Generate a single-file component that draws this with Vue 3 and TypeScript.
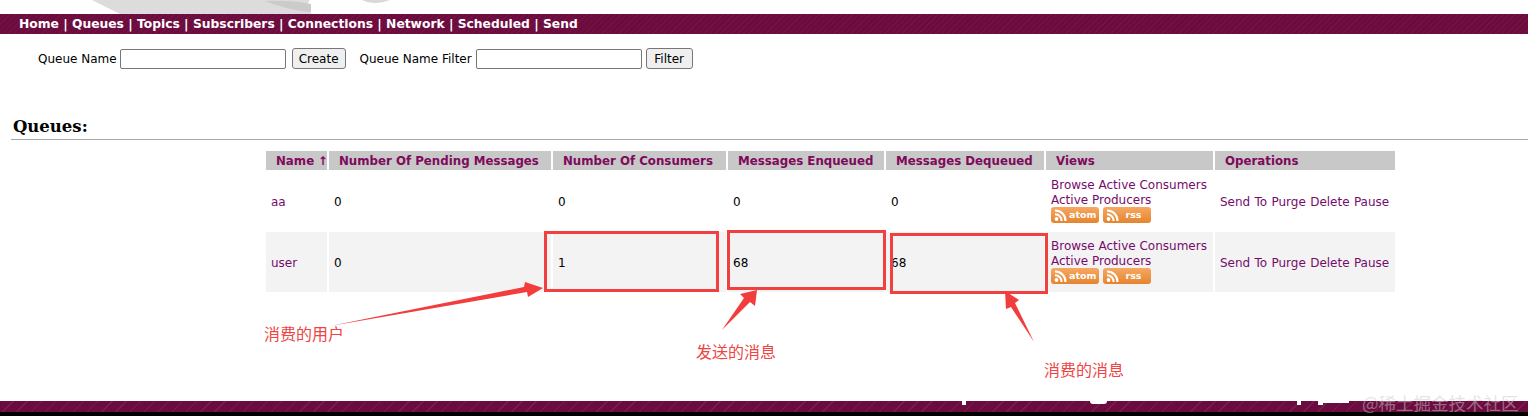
<script setup lang="ts">
const nav: string[] = ['Home', 'Queues', 'Topics', 'Subscribers', 'Connections', 'Network', 'Scheduled', 'Send']
const heads = [
  { label: 'Name ↑', width: 61 },
  { label: 'Number Of Pending Messages', width: 222 },
  { label: 'Number Of Consumers', width: 173 },
  { label: 'Messages Enqueued', width: 156 },
  { label: 'Messages Dequeued', width: 158 },
  { label: 'Views', width: 167 },
  { label: 'Operations', width: 180 },
]
const rows = [
  { name: 'aa', pending: 0, consumers: 0, enq: 0, deq: 0 },
  { name: 'user', pending: 0, consumers: 1, enq: 68, deq: 68 },
]
const boxes = [
  { left: 544, top: 231, width: 175, height: 61 },
  { left: 727, top: 230, width: 159, height: 60 },
  { left: 890, top: 233, width: 158, height: 61 },
]
const arrows = [
  '330 326 524 287 525 282 543 288 528 297 527 292',
  '722 330 744 298 740 294 757 290 755 306 750 302',
  '1034 342 1011 307 1006 309 1005 291 1019 300 1015 303',
]
const notes = [
  { text: '消费的用户', left: 264, top: 323 },
  { text: '发送的消息', left: 696, top: 341 },
  { text: '消费的消息', left: 1044, top: 359 },
]
</script>

<template>
  <div class="page">
    <div class="logo">
      <svg width="400" height="14" viewBox="0 0 400 14">
        <path d="M92 0 C100 4 110 9 120 14 L312 14 C306 9 306 4 310 0 Z" fill="#dcdcdc" />
        <path d="M265 1 C280 0 298 1 311 4 L311 12 C296 11 280 7 265 1 Z" fill="#cbcbcb" />
        <path d="M362 0 L390 0 C380 4 370 4 362 0 Z" fill="#d8d8d8" />
      </svg>
    </div>
    <nav class="nav">
      <template v-for="(item, i) in nav" :key="item">
        <a class="nav-link">{{ item }}</a><span v-if="i < nav.length - 1" class="sep"> | </span>
      </template>
    </nav>

    <form class="forms" @submit.prevent>
      <label class="field">Queue Name</label>
      <input class="text" type="text" />
      <button class="btn create">Create</button>
      <label class="field second">Queue Name Filter</label>
      <input class="text" type="text" />
      <button class="btn filter">Filter</button>
    </form>

    <h2 class="title">Queues:</h2>

    <table class="queues">
      <colgroup>
        <col v-for="h in heads" :key="h.label" :style="{ width: h.width + 'px' }" />
      </colgroup>
      <thead>
        <tr>
          <th v-for="h in heads" :key="h.label">{{ h.label }}</th>
        </tr>
      </thead>
      <tbody>
        <tr v-for="(r, i) in rows" :key="r.name" :class="{ alt: i === 1 }">
          <td class="plain"><a>{{ r.name }}</a></td>
          <td class="plain">{{ r.pending }}</td>
          <td class="plain">{{ r.consumers }}</td>
          <td class="plain">{{ r.enq }}</td>
          <td class="plain">{{ r.deq }}</td>
          <td class="views">
            <a>Browse Active Consumers</a><br />
            <a>Active Producers</a><br />
            <div class="feeds">
              <span v-for="f in ['atom', 'rss']" :key="f" class="feed">
                <svg width="16" height="14" viewBox="0 0 16 14">
                  <circle cx="3.5" cy="11" r="1.9" fill="#fff" />
                  <path d="M2 6.2 A6.5 6.5 0 0 1 8.6 13 M2 2.5 A10.3 10.3 0 0 1 12.5 13" fill="none" stroke="#fff" stroke-width="2.1" />
                </svg>
                <span class="feed-label">{{ f }}</span>
              </span>
            </div>
          </td>
          <td class="plain"><a class="ops">Send To Purge Delete Pause</a></td>
        </tr>
      </tbody>
    </table>

    <div class="footer">
      <i class="mark m1"></i><i class="mark m2"></i><i class="mark m3"></i><i class="mark m4"></i><i class="mark m5"></i>
    </div>
    <div class="base"></div>

    <div v-for="b in boxes" :key="b.left" class="box" :style="{ left: b.left + 'px', top: b.top + 'px', width: b.width + 'px', height: b.height + 'px' }"></div>
    <svg class="arrows" width="1528" height="416" viewBox="0 0 1528 416">
      <polygon v-for="p in arrows" :key="p" :points="p" fill="#f33c3c" />
    </svg>
    <span v-for="n in notes" :key="n.text" class="note" :style="{ left: n.left + 'px', top: n.top + 'px' }">{{ n.text }}</span>
    <span class="watermark">@稀土掘金技术社区</span>
  </div>
</template>

<style>
html, body { margin: 0; background: #fff; overflow: hidden; }
</style>

<style scoped>
.page {
  position: relative;
  width: 1528px;
  height: 416px;
  overflow: hidden;
  background: #fff;
  font-family: "DejaVu Sans", Verdana, sans-serif;
  font-size: 12px;
  color: #000;
}
.logo { height: 14px; overflow: hidden; }
.logo svg { display: block; }
.nav {
  height: 20px;
  box-sizing: border-box;
  padding-left: 19px;
  line-height: 20px;
  font-family: "DejaVu Sans", Verdana, sans-serif;
  font-weight: 700;
  font-size: 12.3px;
  color: #fff;
  white-space: pre;
  background-color: #6c0b3f;
  background-image: repeating-linear-gradient(135deg, #6c0b3f 0 3px, #73133f 3px 4px);
}
.forms {
  display: flex;
  align-items: center;
  height: 21px;
  margin-top: 14px;
  padding-left: 38px;
}
.field { margin-right: 3px; }
.field.second { margin-left: 14px; margin-right: 4px; }
.text {
  width: 166px;
  height: 20px;
  box-sizing: border-box;
  padding: 0 2px;
  border: 1px solid #767676;
  border-radius: 2px;
  background: #fff;
}
.btn {
  height: 21px;
  margin-left: 5px;
  padding: 0 6px;
  box-sizing: border-box;
  border: 1px solid #767676;
  border-radius: 3px;
  background: #efefef;
  font: 12px "DejaVu Sans", Verdana, sans-serif;
  color: #000;
}
.btn.create { margin-left: 6px; }
.btn.filter { margin-left: 4px; width: 47px; padding: 0; }
.title {
  margin: 47px 0 0 11px;
  padding: 0 0 0 2px;
  height: 23px;
  line-height: 22px;
  box-sizing: content-box;
  border-bottom: 1px solid #a9a9a9;
  font-family: "DejaVu Serif", "Liberation Serif", serif;
  font-size: 16.5px;
  font-weight: 700;
}
.queues {
  margin: 10px 0 0 264px;
  border-collapse: separate;
  border-spacing: 2px 1px;
  table-layout: fixed;
  width: 1133px;
}
.queues a { color: #760b6a; }
.queues th {
  height: 19px;
  padding: 0 0 0 10px;
  background: #c8c8c8;
  color: #7f0a5c;
  font-weight: 700;
  font-size: 11.8px;
  text-align: left;
  white-space: nowrap;
  box-sizing: border-box;
}
.queues td {
  height: 60px;
  padding: 0 5px;
  box-sizing: border-box;
  line-height: 15px;
  white-space: nowrap;
  overflow: hidden;
}
.queues td.plain { padding-top: 2px; }
.queues tr.alt td { background: #f3f3f3; }
.ops { word-spacing: 0.5px; }
.feeds { display: flex; gap: 4px; height: 16px; margin-top: -1px; margin-bottom: 1px; }
.feed {
  display: flex;
  align-items: center;
  width: 48px;
  height: 16px;
  box-sizing: border-box;
  padding-left: 2px;
  border-radius: 3px;
  background: linear-gradient(#f6a862, #e5842f);
}
.feed svg { flex: none; }
.feed-label {
  flex: 1;
  margin-right: 5px;
  text-align: center;
  color: #fff;
  font-size: 9.5px;
  font-weight: 700;
  line-height: 14px;
}
.footer {
  position: absolute;
  left: 0;
  right: 0;
  top: 401px;
  height: 11px;
  background-color: #6c0b3f;
  background-image: repeating-linear-gradient(135deg, #6c0b3f 0 9px, #76204b 9px 10px);
  overflow: hidden;
}
.base { position: absolute; left: 0; right: 0; top: 412px; height: 4px; background: #000; }
.mark { position: absolute; top: 0; background: #fff; }
.m1 { left: 962px; width: 4px; height: 4px; }
.m2 { left: 1090px; width: 17px; height: 3px; border-radius: 0 0 8px 8px; }
.m3 { left: 1297px; width: 4px; height: 4px; }
.m4 { left: 1318px; width: 5px; height: 4px; }
.m5 { left: 1323px; width: 26px; height: 2px; }
.box {
  position: absolute;
  box-sizing: border-box;
  border: 3px solid #f04040;
}
.arrows { position: absolute; left: 0; top: 0; pointer-events: none; }
.note {
  position: absolute;
  font-family: "Noto Sans CJK SC", sans-serif;
  font-size: 16px;
  line-height: 20px;
  color: #ee4444;
  white-space: nowrap;
}
.watermark {
  position: absolute;
  left: 1362px;
  top: 390px;
  font-family: "Noto Sans CJK SC", sans-serif;
  font-size: 17.5px;
  line-height: 26px;
  color: rgba(200, 200, 200, 0.5);
  white-space: nowrap;
}
</style>
